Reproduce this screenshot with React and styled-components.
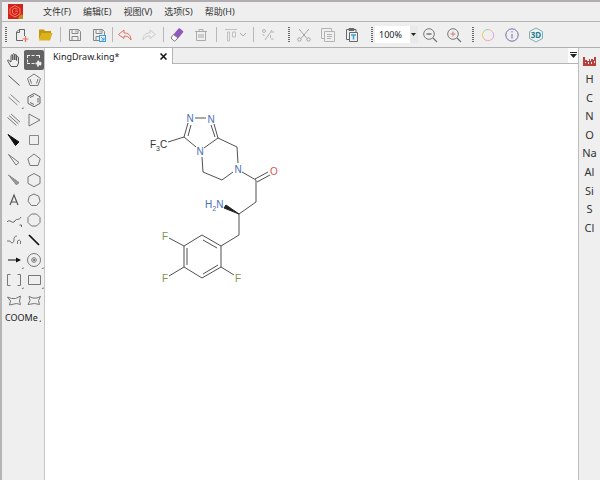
import React from 'react';
import styled, { createGlobalStyle } from 'styled-components';

const GlobalStyle = createGlobalStyle`
  *, *::before, *::after { box-sizing: border-box; }
  body {
    margin: 0;
    background: #fff;
    color: #333;
    font-family: "Noto Sans", "Noto Sans CJK SC", sans-serif;
    font-size: 9px;
  }
  button, select { font: inherit; color: inherit; }
  svg { display: block; flex: none; }
`;

const Window = styled.div`
  min-height: 100vh;
  display: flex;
  flex-direction: column;
  background: #efefef;
  border-top: 2px solid #b1adb0;
  border-left: 2px solid #b5b5b5;
`;

const MenuBar = styled.nav`
  height: 20px;
  display: flex;
  align-items: center;
  padding-left: 6px;
  border-bottom: 1px solid #b4b4b4;
`;

const Logo = styled.div`
  width: 29px;
`;

const PlainButton = styled.button`
  display: flex;
  align-items: center;
  justify-content: center;
  padding: 0;
  border: 0;
  background: none;
  cursor: pointer;
`;

const MenuButton = styled(PlainButton)`
  padding: 0 6px;
  line-height: 14px;
  white-space: nowrap;
`;

const ToolBar = styled.div`
  height: 26px;
  display: flex;
  align-items: center;
  border-bottom: 1px solid #b0b0b0;
`;

const Grip = styled.span`
  width: ${(p) => p.$width}px;
  height: 16px;
  flex: none;
  background: repeating-linear-gradient(#666 0 1px, transparent 1px 2px) right 2px top / 2px 16px no-repeat;
`;

const Separator = styled.span`
  width: ${(p) => p.$width}px;
  height: 15px;
  flex: none;
  background: linear-gradient(#b8b8b8, #b8b8b8) center / 1px 15px no-repeat;
`;

const ToolButton = styled(PlainButton)`
  width: ${(p) => (p.$wide ? 31 : 24)}px;
  height: 22px;
  flex: none;
`;

const ZoomField = styled.label`
  position: relative;
  width: 43px;
  height: 17px;
  flex: none;
  display: flex;
  background: linear-gradient(#e9e9e9, #e9e9e9) right / 8px 17px no-repeat #fff;

  svg {
    position: absolute;
    right: 2px;
    top: 7px;
    pointer-events: none;
  }
`;

const ZoomSelect = styled.select`
  appearance: none;
  width: 100%;
  padding: 0 0 0 4px;
  border: 0;
  background: none;
  line-height: 17px;
  color: #222;
`;

const Body = styled.div`
  flex: 1;
  display: flex;
`;

const Palette = styled.aside`
  width: 43px;
  flex: none;
  padding: 2px 1px 0 2px;
  border-right: 1px solid #c6c6c6;
`;

const PaletteGrid = styled.div`
  display: grid;
  grid-template-columns: repeat(2, 20px);
  grid-auto-rows: 20px;
`;

const PaletteButton = styled(PlainButton)`
  border-radius: 2px;
  background: ${(p) => (p.$active ? '#636363' : 'none')};
`;

const GroupButton = styled(PlainButton)`
  height: 15px;
  padding-left: 1px;
  color: #222;
`;

const Workspace = styled.main`
  flex: 1;
  min-width: 0;
  display: flex;
  flex-direction: column;
`;

const TabStrip = styled.div`
  height: 16px;
  display: flex;
  justify-content: space-between;
  border-bottom: 1px solid #b4b4b4;
`;

const Tab = styled.div`
  width: 128px;
  height: 16px;
  display: flex;
  align-items: center;
  justify-content: space-between;
  padding: 0 5px 0 8px;
  background: #fff;
  border-right: 1px solid #b4b4b4;
  color: #222;
`;

const TabListButton = styled(PlainButton)`
  width: 10px;
  background: #fff;
`;

const Canvas = styled.section`
  flex: 1;
  padding: 36px 0 0 95px;
  background: #fff;
`;

const ElementPanel = styled.aside`
  width: 22px;
  flex: none;
  padding-top: 5px;
  display: flex;
  flex-direction: column;
  gap: 2px;
  border-left: 1px solid #bdbdbd;
`;

const ElementList = styled.div`
  height: 167px;
  display: grid;
  grid-template-rows: repeat(9, 1fr);
`;

const ElementButton = styled(PlainButton)`
  font-size: 11px;
  line-height: 18px;
`;

function Icon({ size = 20, color = '#555', width = 1, children }) {
  return (
    <svg width={size} height={size} viewBox="0 0 20 20" fill="none" stroke={color} strokeWidth={width} aria-hidden="true">
      {children}
    </svg>
  );
}

const More = () => <path d="M19.5 17v2h-2z" fill="#777" stroke="none" />;

const toolbar = [
  { grip: 7 },
  { label: 'New', icon: <Icon><path d="M13.500 11V4.500H8L5.500 7v8.500H12M8.500 4.500V7.500h-3" stroke="#666" /><path d="M14.500 11v6M11.500 14h6" stroke="#f0705c" strokeWidth="1.200" /></Icon> },
  { label: 'Open', icon: <Icon><path d="M4 15V4.500h5l1 1.500h6v2.500H7z" fill="#c3960f" stroke="none" /><path d="M4 15.500 6.500 8H17.500L15 15.500z" fill="#dcb21c" stroke="none" /></Icon> },
  { sep: 6 },
  { label: 'Save', icon: <Icon color="#888"><path d="M4.500 4.500h9l2 2v9h-11zM7 4.500v4h6v-4M7 15.500v-4h6v4M11 5.500v2" /></Icon> },
  { label: 'Save to cloud', icon: <Icon color="#888"><path d="M4.500 4.500h9l2 2v9h-11zM7 4.500v4h6v-4M7 15.500v-4h3M11 5.500v2" /><rect x="10.500" y="10.500" width="6" height="6" fill="#e4f3ff" stroke="#429cd4" /><path d="m12 12 3 3v-2.500M15 15h-2.500" stroke="#429cd4" /></Icon> },
  { sep: 2 },
  { label: 'Undo', icon: <Icon color="#e0705f"><path d="M9 5 3.500 9.500 9 13.500V11c3 0 5 .8 7 4-.2-5-2.500-7-7-7z" /></Icon> },
  { label: 'Redo', icon: <Icon color="#ccc"><path d="m11 5 5.500 4.500-5.500 4V11c-3 0-5 .8-7 4 .2-5 2.500-7 7-7z" /></Icon> },
  { sep: 4 },
  { label: 'Eraser', icon: <Icon><path d="m6.500 9.500 5-6q.7-.7 1.500 0l3 2.500q.7.700 0 1.500l-5 6z" fill="#9159bd" stroke="none" /><path d="m6.500 9.500-2 2.500q-.7 1 .3 2l2 1.700q1 .7 1.800-.2l2.300-2.700z" fill="#fafafa" stroke="#777" /></Icon> },
  { label: 'Delete', icon: <Icon color="#aaa"><path d="M4 6.500h12M8 6V4.500h4V6M5.500 6.500v9h9v-9M8 9v4M10 9v4M12 9v4" /></Icon> },
  { sep: 6 },
  { label: 'Align', wide: true, icon: <svg width="24" height="20" viewBox="0 0 24 20" fill="none" stroke="#c0c0c0" aria-hidden="true"><path d="M2 4.500h12M4.500 7v9h2V7zM9.500 7v5h3V7z" /><path d="m17 8 3 3 3-3" stroke="#aaa" /></svg> },
  { sep: 6 },
  { label: 'Clean up', icon: <Icon color="#b4b4b4"><circle cx="6" cy="6" r="1.500" /><path d="M14 5 7 15M4.500 9.500l2 1M13 7h3M12.500 10v3M13 14h2.500" /></Icon> },
  { grip: 12 },
  { label: 'Cut', icon: <Icon color="#a4a4a4"><path d="m5 4 8 9.500M15 4 7 13.500" /><circle cx="5.500" cy="14.500" r="1.700" /><circle cx="14.500" cy="14.500" r="1.700" /></Icon> },
  { label: 'Copy', icon: <Icon color="#b4b4b4"><path d="M6 13.500H3.500v-10h10V6M6.500 6.500h10v10h-10zM9 9.500h5M9 11.500h5M9 13.500h4" /></Icon> },
  { label: 'Paste', icon: <Icon color="#686868"><path d="M7 14.500H4.500v-10H14V7M7 3.500h5v2H7zM7.500 7.500h8v9h-8z" /><path d="M9 10h5M11.500 10v4.500" stroke="#3ba2d9" strokeWidth="1.500" /></Icon> },
  { grip: 11 },
  { zoom: true },
  { label: 'Zoom out', icon: <Icon color="#777"><circle cx="9" cy="9" r="5.300" /><path d="M6.500 9h5M13 13l4 4" strokeWidth="1.300" /></Icon> },
  { label: 'Zoom in', icon: <Icon color="#777"><circle cx="9" cy="9" r="5.300" /><path d="m13 13 4 4" strokeWidth="1.300" /><path d="M6.500 9h5M9 6.500v5" stroke="#d67777" /></Icon> },
  { grip: 10 },
  { label: 'Colours', icon: <Icon><path d="M10 4.500a5.500 5.500 0 0 1 4.500 2.300" stroke="#f1b796" /><path d="M14.500 6.800a5.500 5.500 0 0 1-1 8" stroke="#d9a5dc" /><path d="M13.500 14.400a5.500 5.500 0 0 1-8-1" stroke="#efa4b0" /><path d="M5.500 13.400a5.500 5.500 0 0 1 0-6.600" stroke="#ecc95f" /><path d="M5.500 6.800A5.500 5.500 0 0 1 10 4.500" stroke="#85d2ba" /></Icon> },
  { label: 'Information', icon: <Icon color="#7070ac"><circle cx="10" cy="10" r="6.200" /><path d="M10 9v4.500M10 6v1.500" /></Icon> },
  { label: '3D view', icon: <Icon color="#7db2ba"><path d="m10 3 6.500 3.500v7L10 17l-6.500-3.500v-7z" /><text x="10" y="13" textAnchor="middle" fontSize="8" fontWeight="700" fill="#257e91" stroke="none">3D</text></Icon> },
];

const palette = [
  ['Pan', <path d="M7 16.500 4 11.500q-1-1.500.3-1.500L7 12V5.500q.9-1.500 1.800 0V10 4.500q1-1.500 2 0V10 5q1-1.200 1.800 0v5.500-3.500q1.300-1.200 1.900.3V13l-1.500 3.500z" />],
  ['Select', <g stroke="#eee"><path d="M3 5.500h13M3 13.500h8M3.500 5v9M15.500 5v4" strokeDasharray="3 1.500" /><circle cx="14.500" cy="13.500" r="2" fill="#eee" strokeDasharray="1.500 1" strokeWidth="2" /></g>],
  ['Single bond', <path d="m4.500 5.500 11 10" />],
  ['Cyclopentadiene', <g stroke="#777"><path d="m10 4 6.500 4.500L14 15.500H6L3.500 8.500z" /><path d="m6 9 1.500 4.500M14 9l-1.500 4.500" /></g>],
  ['Double bond', <g stroke="#888"><path d="m4.500 7 9 8M6.500 4.500l9 8" /><More /></g>],
  ['Benzene', <g stroke="#666"><path d="m10 3.500 6 3.300v6.600l-6 3.300-6-3.300V6.800z" /><path d="m6 7.500 4-2M6 12.500l4 2M14 8v4.500" /></g>],
  ['Triple bond', <path d="m3.500 7.500 9 8M5 5.500l9.500 8.500M7 4l9 8" stroke="#777" />],
  ['Cyclopropane', <path d="m5 4 11 6-11 6z" stroke="#777" />],
  ['Wedge bond', <path d="m4 4.500 7.500 11 3.500-3.500z" fill="#111" stroke="#111" />],
  ['Cyclobutane', <path d="M5.500 5.500h9v9h-9z" stroke="#888" />],
  ['Hollow wedge', <path d="m4.500 4.500 7.500 10.500 3-2.500z" stroke="#777" />],
  ['Cyclopentane', <path d="m10 4 6.200 4.800L14 15.500H6L3.800 8.800z" stroke="#777" />],
  ['Hashed wedge', <path d="m4.500 5 8 10 2.500-2.500z" fill="#999" stroke="#777" strokeDasharray="1.500 .500" />],
  ['Cyclohexane', <path d="m10 3.500 6 3.300v6.600l-6 3.300-6-3.300V6.800z" stroke="#777" />],
  ['Text', <path d="m6 15 4-10 4 10M7.200 12h5.600" strokeWidth="1.200" />],
  ['Cycloheptane', <path d="m10 4 4.700 2.200L16 11.200l-3.300 4.300H7.300L4 11.200l1.300-5z" stroke="#777" />],
  ['Chain', <g stroke="#666"><path d="M3 12c3-4 5 3 8-1 1-3 4 0 6-4" /><path d="M15.500 15h2v2" /></g>],
  ['Cyclooctane', <path d="M7.500 4h5L16 7.500v5L12.500 16h-5L4 12.500v-5z" stroke="#777" />],
  ['Repeat chain', <g stroke="#777"><path d="M3 11h3q2 4 4 0V8q1-2.500 3-2" /><path d="M13.500 14v-3q2-2 3 0v3" /></g>],
  ['Bold bond', <path d="m5 5 10 10" stroke="#111" strokeWidth="1.700" />],
  ['Arrow', <g><path d="M4 10h8" stroke="#111" /><path d="m12 7.500 5 2.500-5 2.500z" fill="#111" stroke="none" /><More /></g>],
  ['Orbital', <g stroke="#777"><circle cx="10" cy="10" r="6.500" /><circle cx="10" cy="10" r="2.300" /><circle cx="10" cy="10" r=".8" fill="#777" /><More /></g>],
  ['Brackets', <g stroke="#777"><path d="M6.500 4.500h-3v11h3M13.500 4.500h3v11h-3" /><More /></g>],
  ['Rectangle', <g stroke="#777"><path d="M4.500 5.500h12v9h-12z" /><More /></g>],
  ['Reflect', <path d="m3.500 7 4 1.500h4L16.500 6l-1 5 1 3.500-4-1-7 1.500 1-4z" stroke="#777" />],
  ['Rotate', <path d="m5 6.500 4 1.500h4l3.500-1.500-2 4 1 4-5-1-6.500 1 2-4z" stroke="#777" />],
];

const menus = ['文件(F)', '编辑(E)', '视图(V)', '选项(S)', '帮助(H)'];
const elements = ['H', 'C', 'N', 'O', 'Na', 'Al', 'Si', 'S', 'Cl'];

const atoms = [
  ['N', 190, 122, '#4b6cb7'],
  ['N', 211, 123, '#4b6cb7'],
  ['N', 200, 155, '#4b6cb7'],
  ['N', 238, 173, '#4b6cb7'],
  ['O', 274, 175, '#d5584c'],
  ['F', 165, 240, '#7d9650'],
  ['F', 165, 282, '#7d9650'],
  ['F', 238, 282, '#7d9650'],
];

const ZoomBox = () => (
  <ZoomField>
    <ZoomSelect aria-label="Zoom" defaultValue="100%">
      <option>50%</option>
      <option>100%</option>
      <option>200%</option>
    </ZoomSelect>
    <svg width="5" height="3" viewBox="0 0 5 3" aria-hidden="true"><path d="M0 0h5L2.500 3z" fill="#222" /></svg>
  </ZoomField>
);

const AppLogo = () => (
  <svg width="15" height="15" viewBox="0 0 15 15" fill="none" aria-label="KingDraw" role="img">
    <path d="M0 0h15v15H0z" fill="#cf2419" />
    <path d="m7 1.500 5 3v5.500l-5 3-5-3V4.500zM9.500 5.500 7 4 4.500 5.500v3.500L7 10.500 9.500 9M7 7.200h3" stroke="#ff7967" />
    <path d="m10 15 1-3 3-2 1 2v3z" fill="#c08a20" />
  </svg>
);

const Molecule = () => (
  <svg width="150" height="190" viewBox="140 100 150 190" fill="none" stroke="#505050" role="img" aria-label="Molecular structure" fontFamily="Liberation Sans, sans-serif" fontSize="10">
    <path d="M195 118h11M188 123l-4 14M191 125l-3 11M168 142l16-5 12 10M204 148l14-10-4-14M215 137l-4-12M218 138l19 9 1 16M233 172l-11 8-19-8-1-15M242 172l14 8v22l-17 12v21l-18 11M255 179l13-7M257 182l13-7" />
    <path d="m221 246-19-11-18 11v21l18 11 19-11zM217 248l-14-8M187 248v17M203 274l15-9M184 246l-15-8M184 267l-15 9M221 267l13 8" />
    <path d="m239 214-15-6 2-3z" fill="#222" stroke="#222" />
    <g stroke="none">
      {atoms.map(([name, x, y, color]) => (
        <text key={`${x}-${y}`} x={x} y={y} textAnchor="middle" fill={color}>{name}</text>
      ))}
      <text x="150" y="148" fill="#333">F<tspan fontSize="7" dy="3">3</tspan><tspan dy="-3">C</tspan></text>
      <text x="205" y="208" fill="#4b6cb7">H<tspan fontSize="7" dy="3">2</tspan><tspan dy="-3">N</tspan></text>
    </g>
  </svg>
);

function ToolbarItem({ item }) {
  if (item.grip) return <Grip $width={item.grip} />;
  if (item.sep) return <Separator $width={item.sep} />;
  if (item.zoom) return <ZoomBox />;
  return <ToolButton aria-label={item.label} $wide={item.wide}>{item.icon}</ToolButton>;
}

export default function App() {
  return (
    <>
      <GlobalStyle />
      <Window>
        <MenuBar aria-label="Main menu">
          <Logo><AppLogo /></Logo>
          {menus.map((name) => <MenuButton key={name}>{name}</MenuButton>)}
        </MenuBar>
        <ToolBar role="toolbar" aria-label="Tools">
          {toolbar.map((item, i) => <ToolbarItem key={i} item={item} />)}
        </ToolBar>
        <Body>
          <Palette aria-label="Drawing tools">
            <PaletteGrid>
              {palette.map(([label, drawing], i) => (
                <PaletteButton key={label} aria-label={label} aria-pressed={i === 1} $active={i === 1}>
                  <Icon>{drawing}</Icon>
                </PaletteButton>
              ))}
            </PaletteGrid>
            <GroupButton>COOMe<svg width="3" height="10" viewBox="0 0 3 10" aria-hidden="true"><path d="M3 7v2H1z" fill="#777" /></svg></GroupButton>
          </Palette>
          <Workspace>
            <TabStrip>
              <Tab>
                KingDraw.king*
                <PlainButton aria-label="Close tab">
                  <svg width="7" height="7" viewBox="0 0 7 7" stroke="#111" strokeWidth="1.500" aria-hidden="true"><path d="m.500.500 6 6m0-6-6 6" /></svg>
                </PlainButton>
              </Tab>
              <TabListButton aria-label="List tabs">
                <svg width="7" height="7" viewBox="0 0 7 7" fill="#222" aria-hidden="true"><path d="M0 0h7v1H0zM0 2h7L3.500 6z" /></svg>
              </TabListButton>
            </TabStrip>
            <Canvas aria-label="Drawing"><Molecule /></Canvas>
          </Workspace>
          <ElementPanel aria-label="Elements">
            <ElementButton aria-label="Periodic table">
              <svg width="21" height="15" viewBox="0 0 21 15" fill="#b9403d" aria-hidden="true"><path d="M4 4h2v3h2v1h2V6h1v2h1V6h2v1h1V4h2v9H4z" /><path d="M6 9h1v1H6zM9 9h1v2H9zM12 9h1v2h-1zM15 8h1v2h-1z" fill="#eee" /></svg>
            </ElementButton>
            <ElementList>
              {elements.map((name) => <ElementButton key={name}>{name}</ElementButton>)}
            </ElementList>
          </ElementPanel>
        </Body>
      </Window>
    </>
  );
}
